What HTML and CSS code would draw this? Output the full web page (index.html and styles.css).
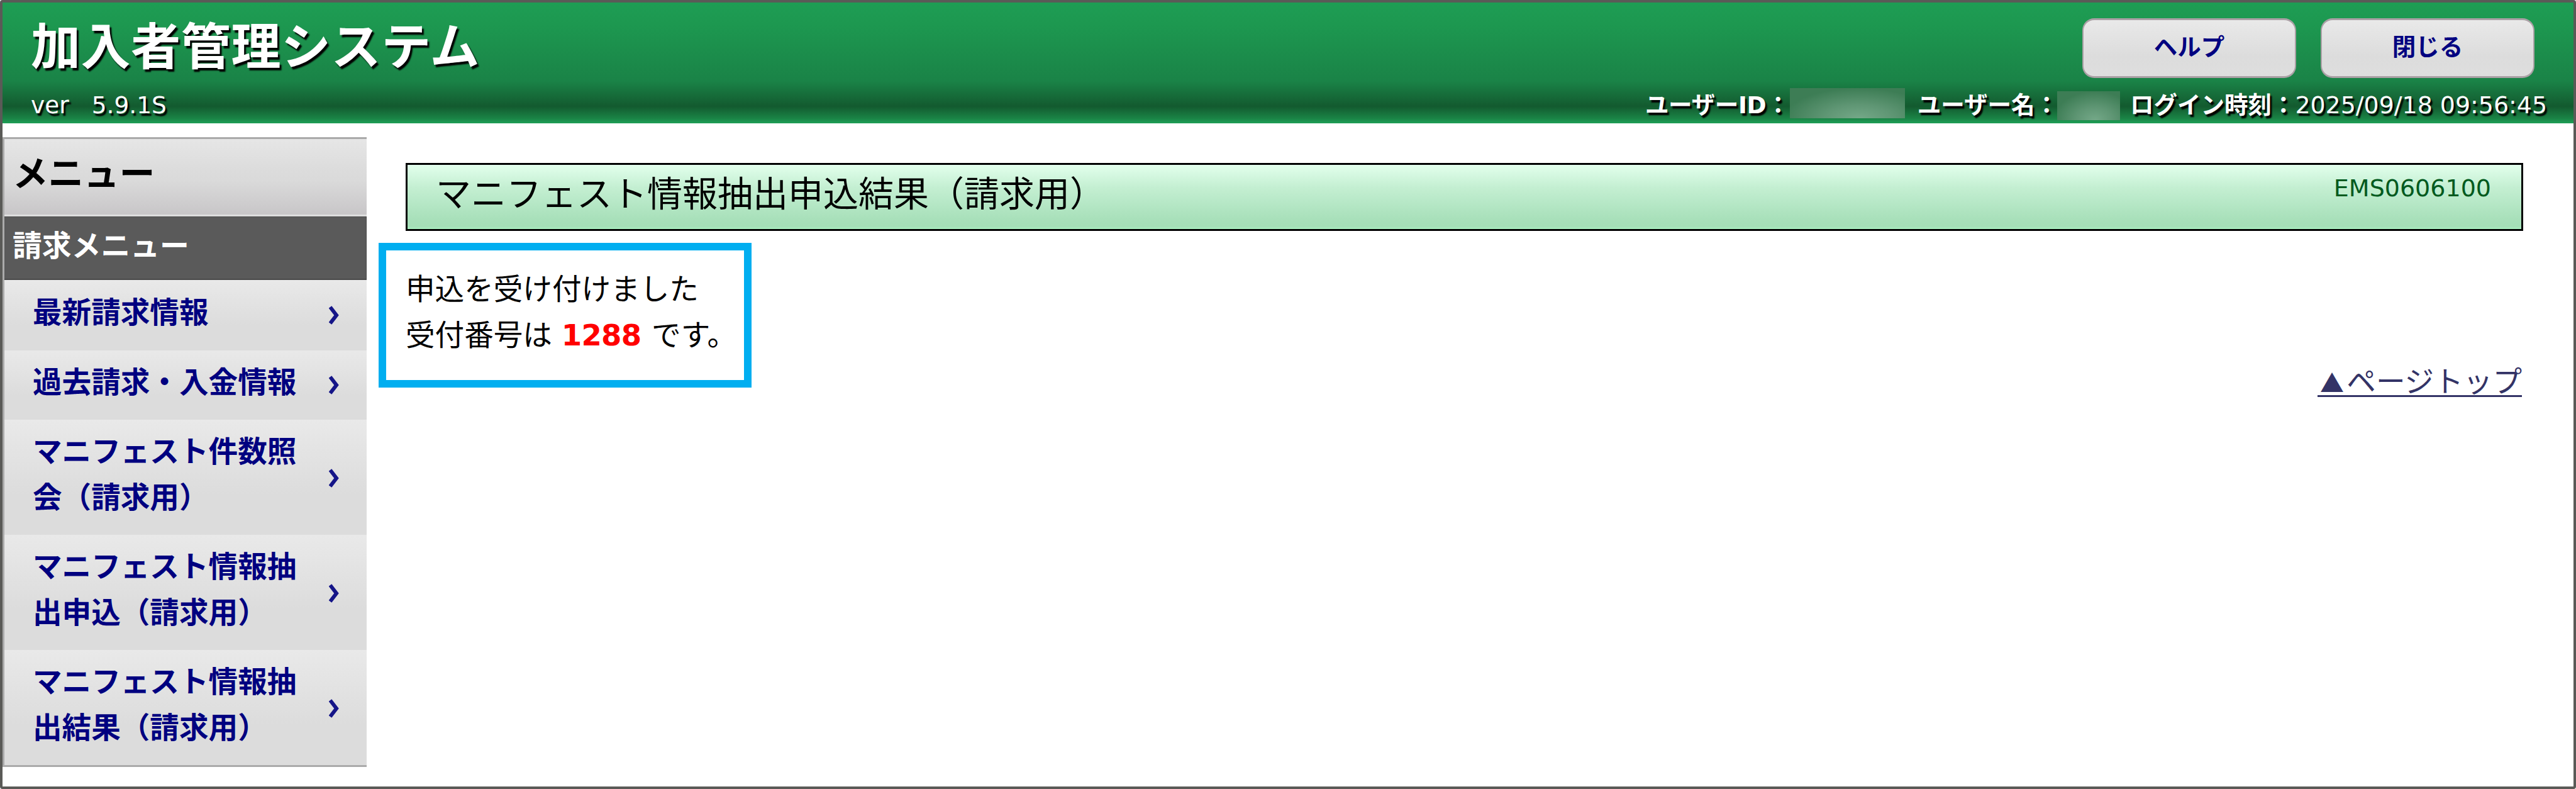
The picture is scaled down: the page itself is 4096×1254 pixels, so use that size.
FILE: index.html
```html
<!DOCTYPE html>
<html lang="ja">
<head>
<meta charset="utf-8">
<title>加入者管理システム</title>
<link rel="stylesheet" href="styles.css">
</head>
<body>
<div class="window">
  <header class="header">
    <div class="brand">
      <h1 class="system-name">加入者管理システム</h1>
      <p class="version"><span>ver</span><span>5.9.1S</span></p>
    </div>
    <div class="tools">
      <div class="buttons">
        <button class="button" type="button">ヘルプ</button>
        <button class="button" type="button">閉じる</button>
      </div>
      <div class="session">
        <b class="label-id">ユーザーID：</b><span class="mask mask-id"></span>
        <b class="label-name">ユーザー名：</b><span class="mask mask-name"></span>
        <b class="label-time">ログイン時刻：</b><span class="time">2025/09/18 09:56:45</span>
      </div>
    </div>
  </header>
  <div class="body">
    <nav class="sidebar">
      <h2 class="menu-title">メニュー</h2>
      <h3 class="menu-group">請求メニュー</h3>
      <ul class="menu">
        <li class="item first"><a>最新請求情報</a><svg class="arrow" viewBox="0 0 16 30"><path d="M2 2L12 15L2 28"/></svg></li>
        <li class="item"><a>過去請求・入金情報</a><svg class="arrow" viewBox="0 0 16 30"><path d="M2 2L12 15L2 28"/></svg></li>
        <li class="item tall"><a>マニフェスト件数照<br>会（請求用）</a><svg class="arrow" viewBox="0 0 16 30"><path d="M2 2L12 15L2 28"/></svg></li>
        <li class="item tall"><a>マニフェスト情報抽<br>出申込（請求用）</a><svg class="arrow" viewBox="0 0 16 30"><path d="M2 2L12 15L2 28"/></svg></li>
        <li class="item tall"><a>マニフェスト情報抽<br>出結果（請求用）</a><svg class="arrow" viewBox="0 0 16 30"><path d="M2 2L12 15L2 28"/></svg></li>
      </ul>
    </nav>
    <main class="main">
      <div class="page-title">
        <h2 class="page-name">マニフェスト情報抽出申込結果（請求用）</h2>
        <span class="page-code">EMS0606100</span>
      </div>
      <div class="notice">
        <p>申込を受け付けました</p>
        <p>受付番号は <strong class="number">1288</strong> です。</p>
      </div>
      <a class="page-top"><span class="mark">▲</span>ページトップ</a>
    </main>
  </div>
</div>
</body>
</html>
```

FILE: styles.css
```css
* {
  box-sizing: border-box;
  margin: 0;
  padding: 0;
}

body {
  background: #fff;
  color: #000;
  font-family: "DejaVu Sans", "Noto Sans CJK JP", sans-serif;
  font-size: 46.6px;
  line-height: 73px;
}

.window {
  width: 4096px;
  height: 1254px;
  border: 4px solid #5a5a57;
  border-radius: 4px;
  overflow: hidden;
}

.header {
  display: flex;
  justify-content: space-between;
  height: 192px;
  padding: 0 42px 0 45px;
  color: #fff;
  text-shadow: 3px 4px 2px #000;
  background: linear-gradient(#1e9d54 0%, #1d9850 18%, #1a8347 65%, #135a2f 86%, #1a8446 96%, #1fa057 100%);
}

.system-name {
  padding-top: 20px;
  font-size: 79px;
  line-height: 104px;
  letter-spacing: 0.6px;
  white-space: nowrap;
}

.version {
  display: flex;
  gap: 36px;
  padding-top: 15px;
  font-size: 37.5px;
  line-height: 48px;
}

.tools {
  display: flex;
  flex-direction: column;
  align-items: flex-end;
}

.buttons {
  display: flex;
  gap: 39px;
  padding: 25px 20px 0 0;
}

.button {
  width: 340px;
  height: 95px;
  border: 2px solid #aaa0a5;
  border-width: 3px 2px;
  border-radius: 19px;
  padding-bottom: 4px;
  background: linear-gradient(#e9e9e9, #dcdcdc 65%, #dedede);
  color: #000080;
  font: bold 37.5px/48px "DejaVu Sans", "Noto Sans CJK JP", sans-serif;
}

.session {
  display: flex;
  align-items: flex-start;
  height: 72px;
  padding-top: 19px;
  font-size: 37.5px;
  line-height: 48px;
  white-space: nowrap;
}

.label-id {
  letter-spacing: -0.3px;
}

.label-name {
  margin-left: 20px;
}

.label-time {
  margin-left: 16px;
}

.time {
  font-size: 37.9px;
}

.mask {
  height: 48px;
  margin-top: -3px;
  background: radial-gradient(ellipse 65% 100% at 60% 100%, #74a888, #5f9674 45%, #3d7d55);
}

.mask-id {
  width: 183px;
}

.mask-name {
  width: 100px;
  height: 46px;
  margin: 2px 0 0 -2px;
}

.body {
  display: flex;
  align-items: flex-start;
  padding-top: 22px;
}

.sidebar {
  width: 579px;
  border: 3px solid #aaa;
  border-right: 0;
  font-weight: bold;
}

.menu-title {
  height: 123px;
  padding: 19px 0 0 13px;
  border-bottom: 3px solid #dedede;
  background: linear-gradient(#e6e6e6, #dcdcdc 40%, #dadada 55%, #c8c6c8);
  font-size: 56.6px;
  line-height: 73px;
}

.menu-group {
  height: 101px;
  padding: 10px 0 0 13px;
  border: solid #4a4a4a;
  border-width: 1px 1px 2px 0;
  background: #5a5a5a;
  color: #fff;
  font-size: 46.8px;
}

.menu {
  list-style: none;
}

.item {
  display: flex;
  align-items: center;
  justify-content: space-between;
  height: 110px;
  padding: 0 44px 7px 45px;
  background: linear-gradient(#e9e9e9, #dcdcdc 65%, #dcdcdc);
  color: #000080;
  white-space: nowrap;
}

.item.first {
  height: 112px;
}

.item.tall {
  height: 183px;
}

.arrow {
  width: 16px;
  height: 30px;
  margin-top: 7px;
  fill: none;
  stroke: #151588;
  stroke-width: 6;
}

.item.tall .arrow {
  margin-top: 10px;
}

.main {
  display: flex;
  flex-direction: column;
  align-items: flex-start;
  width: 3427px;
  padding: 41px 0 0 19px;
}

.page-title {
  display: flex;
  justify-content: space-between;
  align-items: flex-start;
  width: 3367px;
  height: 108px;
  margin-left: 43px;
  padding: 10px 48px 0 45px;
  border: 3px solid #000;
  background: linear-gradient(#e2ffec, #c4efd2 35%, #a8e0ba 85%, #a4dfb7 96%, #a8f0c0);
}

.page-name {
  font-size: 56px;
  font-weight: normal;
}

.page-code {
  color: #005a1e;
  font-size: 38px;
  line-height: 54px;
}

.notice {
  width: 593px;
  height: 230px;
  margin-top: 19px;
  padding: 26px 0 0 31px;
  border: 12px solid #00aef0;
  white-space: nowrap;
}

.number {
  margin-right: 2px;
  color: #f00;
  letter-spacing: -0.8px;
}

.page-top {
  display: flex;
  align-self: flex-end;
  align-items: baseline;
  height: 53px;
  margin-top: -38px;
  border-bottom: 3px solid #333366;
  color: #333366;
  font-family: "Noto Sans CJK JP", sans-serif;
  line-height: 50px;
}

.mark {
  width: 46.6px;
  font-size: 38px;
  text-align: center;
}
```
